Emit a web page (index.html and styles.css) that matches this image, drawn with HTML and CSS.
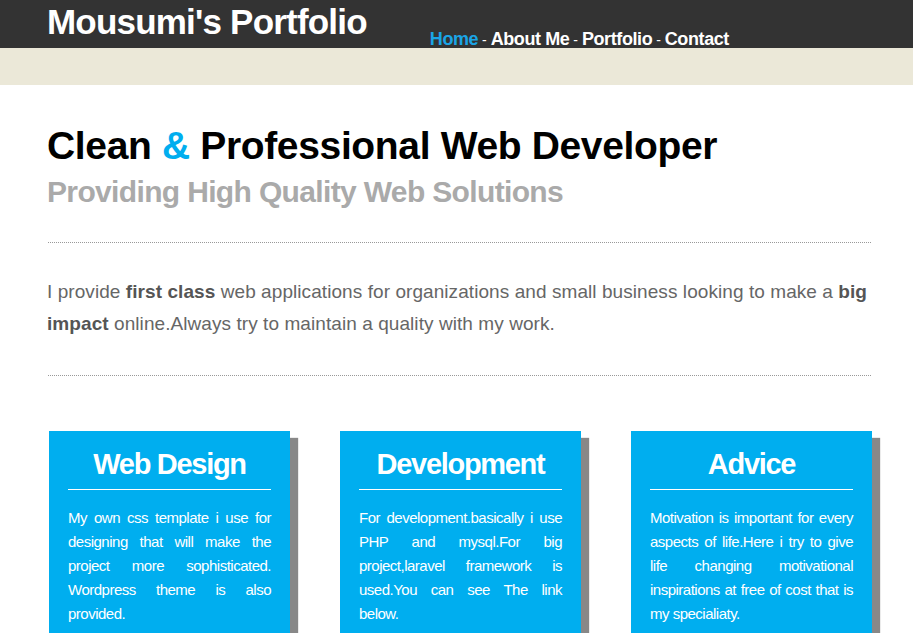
FILE: index.html
```html
<!DOCTYPE html>
<html>
<head>
<meta charset="utf-8">
<title>Mousumi's Portfolio</title>
<link rel="stylesheet" href="styles.css">
</head>
<body>
<header class="topbar">
  <h1 class="brand">Mousumi's Portfolio</h1>
  <nav class="nav">
    <a class="nav-link active" href="#">Home</a><span class="sep"> - </span><a class="nav-link" href="#">About Me</a><span class="sep"> - </span><a class="nav-link" href="#">Portfolio</a><span class="sep"> - </span><a class="nav-link" href="#">Contact</a>
  </nav>
</header>
<div class="band"></div>
<main class="content">
  <h2 class="headline">Clean <span class="amp">&amp;</span> Professional Web Developer</h2>
  <p class="tagline">Providing High Quality Web Solutions</p>
  <hr class="dotted">
  <p class="lead">I provide <b>first class</b> web applications for organizations and small business looking to make a <b>big impact</b> online.Always try to maintain a quality with my work.</p>
  <hr class="dotted">
  <div class="cards">
    <div class="card">
      <h3 class="card-title">Web Design</h3>
      <p class="card-text">My own css template i use for designing that will make the project more sophisticated. Wordpress theme is also provided.</p>
    </div>
    <div class="card">
      <h3 class="card-title">Development</h3>
      <p class="card-text">For development.basically i use PHP and mysql.For big project,laravel framework is used.You can see The link below.</p>
    </div>
    <div class="card">
      <h3 class="card-title">Advice</h3>
      <p class="card-text">Motivation is important for every aspects of life.Here i try to give life changing motivational inspirations at free of cost that is my specialiaty.</p>
    </div>
  </div>
</main>
</body>
</html>
```
FILE: styles.css
```css
html, body {
  margin: 0;
  padding: 0;
  background: #fff;
  font-family: "Liberation Sans", Arial, sans-serif;
}

.topbar {
  height: 48px;
  background: #333333;
  display: flex;
  align-items: flex-start;
  padding-left: 47px;
  box-sizing: border-box;
}

.brand {
  margin: 0;
  padding-top: 1px;
  font-size: 35px;
  line-height: 42px;
  font-weight: bold;
  color: #fff;
  letter-spacing: -0.8px;
  white-space: nowrap;
}

.nav {
  margin-left: 63px;
  padding-top: 27px;
  font-size: 18px;
  line-height: 24px;
  white-space: nowrap;
}

.nav-link {
  color: #fff;
  font-weight: bold;
  text-decoration: none;
  letter-spacing: -0.4px;
}

.nav-link.active {
  color: #1aa5e6;
}

.sep {
  color: #fff;
  font-size: 14px;
}

.band {
  height: 37px;
  background: #ebe8d8;
}

.content {
  padding: 0 42px 0 47px;
}

.headline {
  margin: 38px 0 0;
  font-size: 39px;
  line-height: 46px;
  font-weight: bold;
  color: #000;
  letter-spacing: -0.35px;
}

.amp {
  color: #00aeef;
}

.tagline {
  margin: 5px 0 0;
  font-size: 30px;
  line-height: 36px;
  font-weight: bold;
  color: #aaaaaa;
  letter-spacing: -0.65px;
}

.dotted {
  margin: 32px 0 0 1px;
  border: 0;
  border-top: 1px dotted #999;
  height: 0;
}

.lead {
  margin: 33px 0 0;
  font-size: 19px;
  line-height: 32px;
  color: #666;
  letter-spacing: 0.07px;
}

.lead b {
  color: #555;
}

.lead + .dotted {
  margin-top: 35px;
}

.cards {
  margin: 55px 0 0 2px;
  display: grid;
  grid-template-columns: repeat(3, 241px);
  column-gap: 50px;
}

.card {
  background: #00aeef;
  box-shadow: 8px 7px 1px #888;
  padding: 0 19px 20px;
  color: #fff;
}

.card-title {
  margin: 16px 0 0;
  padding-bottom: 8px;
  border-bottom: 1px solid #fff;
  font-size: 29px;
  line-height: 34px;
  font-weight: bold;
  text-align: center;
  letter-spacing: -1.3px;
}

.card-text {
  margin: 16px 0 0;
  font-size: 15px;
  line-height: 24px;
  text-align: justify;
  letter-spacing: -0.5px;
}
```
